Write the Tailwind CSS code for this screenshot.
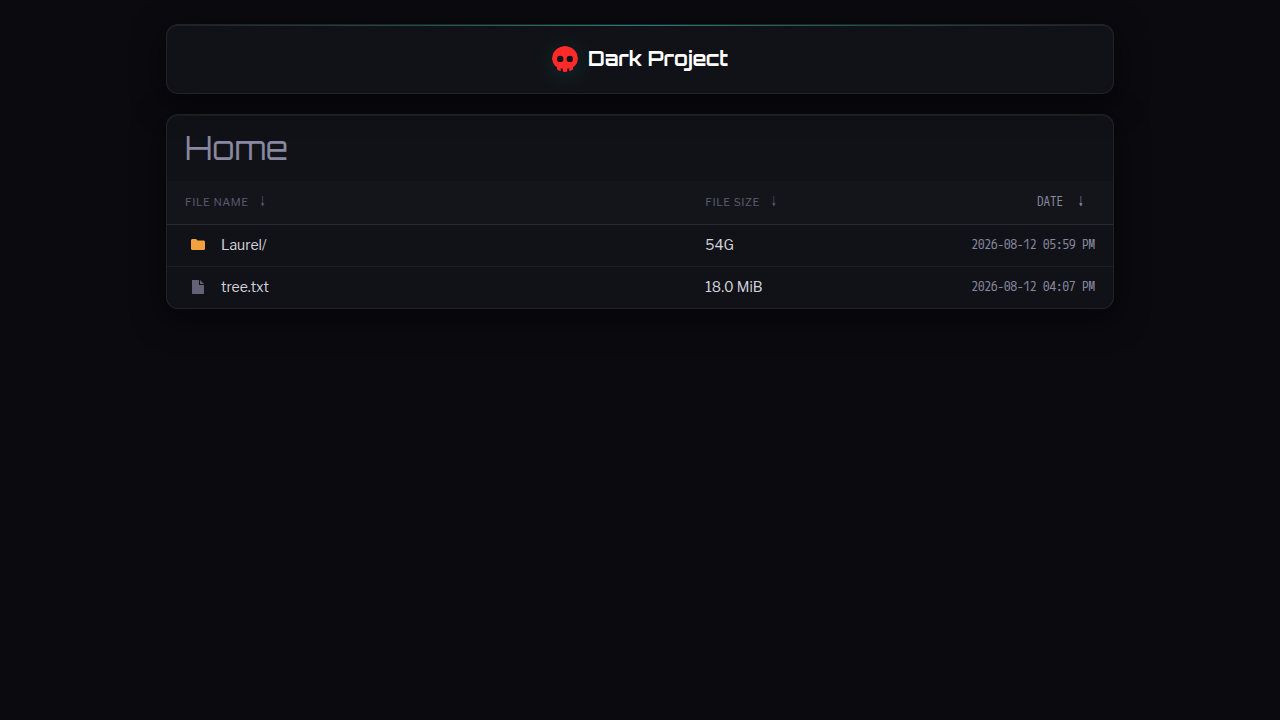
<!DOCTYPE html>
<html lang="en">
<head>
  <meta charset="UTF-8" />
  <meta name="viewport" content="width=device-width, initial-scale=1.0" />
  <title>Dark Project</title>
  <script src="https://cdn.jsdelivr.net/npm/@tailwindcss/browser@4"></script>
</head>
<body class="min-h-screen bg-[#0a0a0f] font-['Libre_Franklin','Inter',sans-serif] text-[#d4d4dc]">
  <div class="mx-auto flex max-w-[980px] flex-col gap-5 px-4 py-6">

    <header class="relative flex h-[70px] items-center justify-center rounded-xl border border-white/7 bg-[#111217] shadow-[0_8px_32px_rgba(0,0,0,0.5),inset_0_1px_0_rgba(255,255,255,0.05)]">
      <!-- accent line along the top edge -->
      <div class="absolute inset-x-0 top-0 h-px bg-linear-to-r from-transparent via-[#1f8079] to-transparent"></div>
      <a href="#" class="flex items-center gap-[10px]">
        <svg class="size-[26px] rounded-full shadow-[0_4px_24px_rgba(0,229,204,0.15)]" viewBox="0 0 26 26" fill="#ff2a2a" aria-hidden="true">
          <path fill-rule="evenodd" d="M13 0C5.500 0 0 5.200 0 12C0 16.300 2 19.500 5 21.300V24.500Q5 26 6.500 26H7.700Q8.700 26 8.700 25V22.500H10.700V25Q10.700 26 11.700 26H14.300Q15.300 26 15.300 25V22.500H17.300V25Q17.300 26 18.300 26H19.500Q21 26 21 24.500V21.300C24 19.500 26 16.300 26 12C26 5.200 20.500 0 13 0ZM8.200 9.700a3.200 3.200 0 1 1 0 6.400 3.200 3.200 0 0 1 0-6.400Zm9.600 0a3.200 3.200 0 1 1 0 6.400 3.200 3.200 0 0 1 0-6.400Z" />
        </svg>
        <span class="font-['Orbitron','Inter',sans-serif] text-[20px] leading-7 font-bold text-white">Dark Project</span>
      </a>
    </header>

    <main class="overflow-hidden rounded-xl border border-white/7 bg-[#111217] shadow-[0_8px_32px_rgba(0,0,0,0.5),inset_0_1px_0_rgba(255,255,255,0.05)]">
      <h1 class="px-[18px] pt-[11px] pb-[11px] font-['Orbitron','Inter',sans-serif] text-[32px] leading-[44px] font-light text-[#8888a0]">Home</h1>

      <table class="w-full table-fixed text-left text-sm">
        <thead class="bg-[#14151a] text-[11px] text-[#5a5a70]">
          <tr class="h-[43px] border-b border-white/10">
            <th class="w-[55%] px-[18px] font-normal tracking-wider"><a href="#">FILE NAME</a><a href="#" class="ml-2 font-['Zen_Kaku_Gothic_New',sans-serif] text-xs" aria-label="Sort by name">↓</a></th>
            <th class="w-1/5 px-[18px] font-normal tracking-wider"><a href="#">FILE SIZE</a><a href="#" class="ml-2 font-['Zen_Kaku_Gothic_New',sans-serif] text-xs" aria-label="Sort by size">↓</a></th>
            <th class="w-1/4 pr-[26px] pb-0.5 text-right font-['M_PLUS_1_Code','Liberation_Mono',monospace] text-[13px] font-normal text-[#8888a0]"><a href="#">DATE</a><a href="#" class="ml-3 font-['Zen_Kaku_Gothic_New',sans-serif] text-xs" aria-label="Sort by date">↓</a></th>
          </tr>
        </thead>
        <tbody>
          <tr class="h-[42px] border-b border-white/6">
            <td class="px-[18px]">
              <a href="#" class="flex items-center gap-4">
                <svg class="ml-1.5 h-[14px] w-[14px]" viewBox="0 0 14 14" fill="#f3a03f" aria-hidden="true">
                  <path d="M1.500 1H5l1.500 1.500h6c.8 0 1.500.7 1.500 1.500v6.500c0 .8-.7 1.500-1.500 1.500h-11C.7 12 0 11.300 0 10.500v-8C0 1.700.7 1 1.500 1Z" />
                </svg>
                Laurel/
              </a>
            </td>
            <td class="px-[18px]">54G</td>
            <td class="pr-[18px] pb-0.5 text-right font-['M_PLUS_1_Code','Liberation_Mono',monospace] text-[13px] text-[#8888a0]">2026-08-12 05:59 PM</td>
          </tr>
          <tr class="h-[42px]">
            <td class="px-[18px]">
              <a href="#" class="flex items-center gap-4">
                <svg class="ml-1.5 h-[14px] w-[14px]" viewBox="0 0 14 14" fill="#626276" aria-hidden="true">
                  <path d="M1 0h7v5h5v8c0 .6-.4 1-1 1H2c-.6 0-1-.4-1-1V0Zm8 0 4 4H9V0Z" />
                </svg>
                tree.txt
              </a>
            </td>
            <td class="px-[18px]">18.0 MiB</td>
            <td class="pr-[18px] pb-0.5 text-right font-['M_PLUS_1_Code','Liberation_Mono',monospace] text-[13px] text-[#8888a0]">2026-08-12 04:07 PM</td>
          </tr>
        </tbody>
      </table>
    </main>

  </div>
</body>
</html>
